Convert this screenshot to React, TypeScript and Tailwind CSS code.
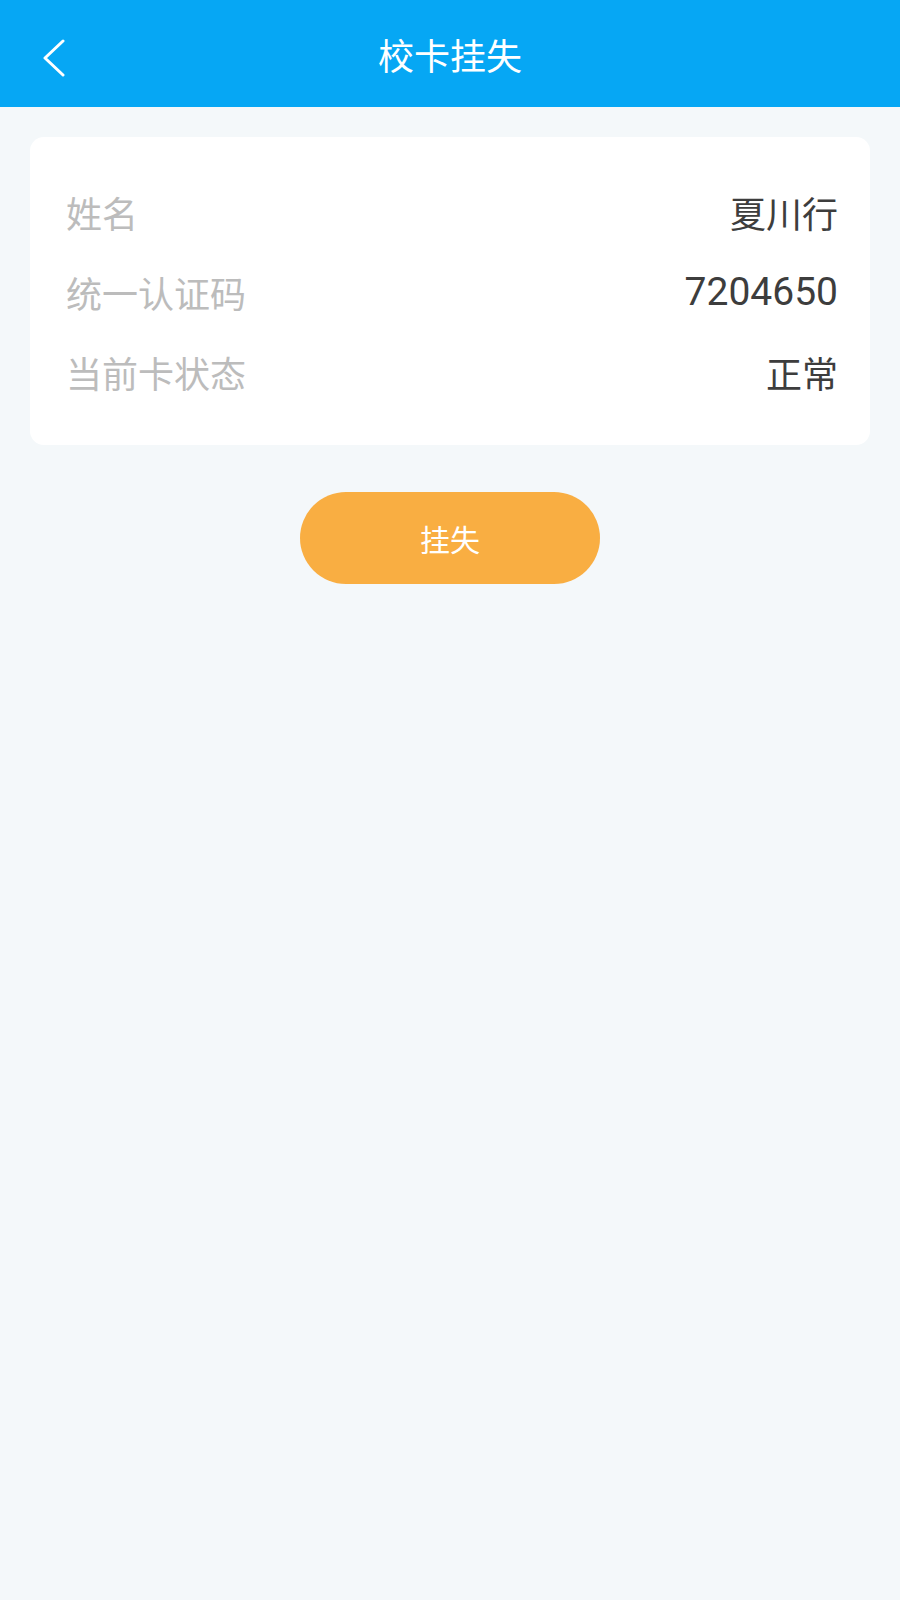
const rows = [
  { label: "姓名", value: "夏川行", numeric: false },
  { label: "统一认证码", value: "7204650", numeric: true },
  { label: "当前卡状态", value: "正常", numeric: false },
];

export default function App() {
  return (
    <div
      className="min-h-[1600px] w-full bg-[#f4f8fa]"
      style={{ fontFamily: '"Noto Sans CJK SC", "Noto Sans", sans-serif' }}
    >
      <header className="relative flex h-[107px] items-center justify-center bg-[#06a7f4]">
        <button className="absolute left-[36px] top-[35px] flex h-[46px] w-[36px] items-center justify-center">
          <svg width="24" height="38" viewBox="0 0 24 38" fill="none">
            <path d="M21 2L3 19L21 36" stroke="#ffffff" strokeWidth="3" strokeLinecap="round" strokeLinejoin="round" />
          </svg>
        </button>
        <h1 className="text-[36px] font-normal leading-none text-white">校卡挂失</h1>
      </header>

      <div className="mx-[30px] mt-[30px] rounded-[14px] bg-white pb-[33px] pl-[36px] pr-[32px] pt-[35px]">
        {rows.map((row) => (
          <div key={row.label} className="flex h-[80px] items-center justify-between">
            <span className="text-[36px] leading-none text-[#bcbcbc]">{row.label}</span>
            {row.numeric ? (
              <span className="font-['Roboto',sans-serif] text-[39px] leading-none text-[#3d3d3d]">{row.value}</span>
            ) : (
              <span className="text-[36px] leading-none text-[#3d3d3d]">{row.value}</span>
            )}
          </div>
        ))}
      </div>

      <div className="mt-[47px] flex justify-center">
        <button className="flex h-[92px] w-[300px] items-center justify-center rounded-full bg-[#f9ae42] text-[30px] leading-none text-white">
          挂失
        </button>
      </div>
    </div>
  );
}
